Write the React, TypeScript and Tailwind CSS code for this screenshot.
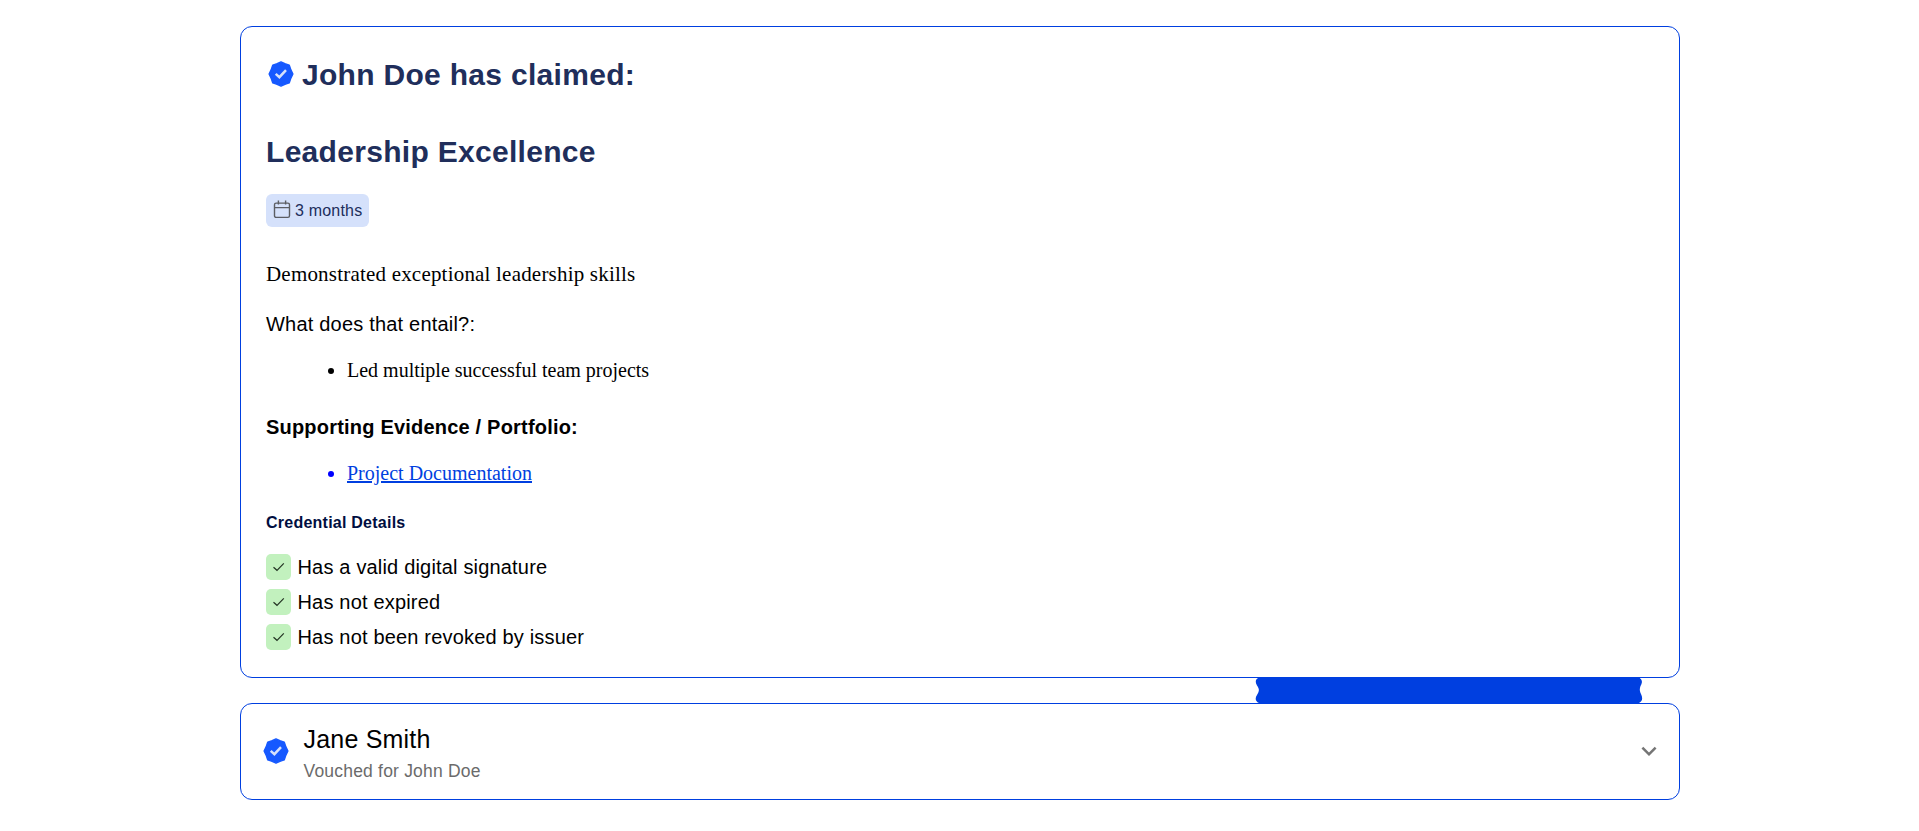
import React from "react";

const SANS = "font-['Liberation_Sans',Arial,sans-serif]";

function VerifiedBadge() {
  return (
    <svg viewBox="0 0 26 26" className="size-[26px] shrink-0">
      <path
        d="M13 0.900L16.900 2.700L21.200 4.100L22.900 8.900L24.900 13L22.900 17.100L21.200 21.900L16.900 23.300L13 25.100L9.100 23.300L4.800 21.900L3.100 17.100L1.100 13L3.100 8.900L4.800 4.100L9.100 2.700Z"
        fill="#1659ff"
        stroke="#1659ff"
        strokeWidth="1.4"
        strokeLinejoin="round"
      />
      <path d="M7.700 12.900L11.400 16.200L18 9.200" fill="none" stroke="#d6e1fb" strokeWidth="2.5" />
    </svg>
  );
}

function CalendarIcon() {
  return (
    <svg viewBox="0 0 18 19" className="-mt-[2px] h-[19px] w-[18px] shrink-0" fill="none" stroke="#5b5d63" strokeWidth="1.4">
      <rect x="1.500" y="3.100" width="15" height="14.300" rx="1.600" />
      <path d="M1.500 7.600H16.500M5.400 0.600V4.600M12.600 0.600V4.600" />
    </svg>
  );
}

function Check({ children }: { children: React.ReactNode }) {
  return (
    <li className="flex h-[26px] items-center gap-[6.5px]">
      <span className="flex h-[26px] w-[25px] items-center justify-center rounded-[5px] bg-[#c2f1be]">
        <svg viewBox="0 0 12 10" className="h-[10px] w-[12px]" fill="none" stroke="#243424" strokeWidth="1.2">
          <path d="M0.500 5.200L4 8.300L10.800 1.300" />
        </svg>
      </span>
      <span className="text-[20px] leading-[26px] tracking-[0.180px]">{children}</span>
    </li>
  );
}

export default function App() {
  return (
    <main className={`min-h-[831px] bg-white pt-[26px] text-black ${SANS}`}>
      <div className="ml-[240px] flex w-[1440px] flex-col">
        <section className="flex h-[652px] flex-col items-start rounded-xl border border-[#003fe0] px-[25px] pt-[29px]">
          <h1 className="flex h-[38px] items-center gap-[8px] pl-[2px] text-[30px] font-bold leading-[38px] tracking-[0.3px] text-[#202e5b]">
            <span className="-mt-[2px] flex">
              <VerifiedBadge />
            </span>
            <span>John Doe has claimed:</span>
          </h1>
          <h2 className="mt-[39px] text-[30px] font-bold leading-[38px] tracking-[0.3px] text-[#202e5b]">
            Leadership Excellence
          </h2>
          <div className="mt-[23px] flex h-[33px] w-[103px] items-center rounded-[6px] bg-[#d5e1fb] pl-[7px]">
            <CalendarIcon />
            <span className="ml-[4px] text-[16px] leading-[20px] tracking-[0.2px] text-[#202e5b]">3 months</span>
          </div>
          <p className="mt-[35px] font-['Liberation_Serif','Times_New_Roman',serif] text-[21px] leading-[24px] tracking-[0.2px]">
            Demonstrated exceptional leadership skills
          </p>
          <p className="mt-[26px] text-[20px] leading-[24px] tracking-[0.2px]">What does that entail?:</p>
          <ul className="mt-[22px] list-disc pl-[81px] font-['Liberation_Serif','Times_New_Roman',serif] text-[20px] leading-[24px]">
            <li>Led multiple successful team projects</li>
          </ul>
          <h3 className="mt-[33px] text-[20px] font-bold leading-[24px] tracking-[0.2px]">
            Supporting Evidence / Portfolio:
          </h3>
          <ul className="mt-[22px] list-disc pl-[81px] font-['Liberation_Serif','Times_New_Roman',serif] text-[20px] leading-[24px] text-[#0000ff]">
            <li className="underline">
              <a href="#" className="text-[#003fe0]">
                Project Documentation
              </a>
            </li>
          </ul>
          <h4 className="mt-[26px] text-[16px] font-bold leading-[24px] tracking-[0.240px] text-[#000e40]">
            Credential Details
          </h4>
          <ul className="mt-[19px] flex flex-col gap-[9px]">
            <Check>Has a valid digital signature</Check>
            <Check>Has not expired</Check>
            <Check>Has not been revoked by issuer</Check>
          </ul>
        </section>

        <div className="flex h-[25px] pl-[1015px]">
          <svg viewBox="0 0 388 26" className="-mt-px h-[26px] w-[388px]">
            <path
              d="M5 0H383C388 2 387.500 6 385.500 9C384.500 12 384.500 14 386 17C388 21 387.500 24 384 26H4C0 24 0 21 2 18C4.500 14 4.500 12 2 8.500C0 5 0 2 5 0Z"
              fill="#003fe0"
            />
          </svg>
        </div>

        <section className="flex h-[97px] items-center rounded-xl border border-[#003fe0] pl-[22px] pr-[15px]">
          <span className="-mt-[2px] flex">
            <VerifiedBadge />
          </span>
          <div className="ml-[14.5px] flex flex-col pt-[7px]">
            <span className="text-[25px] leading-[31px] tracking-[0.2px]">Jane Smith</span>
            <span className="text-[17.5px] leading-[32px] tracking-[0.2px] text-[#6b6b6b]">Vouched for John Doe</span>
          </div>
          <svg viewBox="0 0 24 24" className="-mt-[2px] ml-auto size-[30px]" fill="#757575">
            <path d="M16.590 8.590 12 13.170 7.410 8.590 6 10l6 6 6-6z" />
          </svg>
        </section>
      </div>
    </main>
  );
}
